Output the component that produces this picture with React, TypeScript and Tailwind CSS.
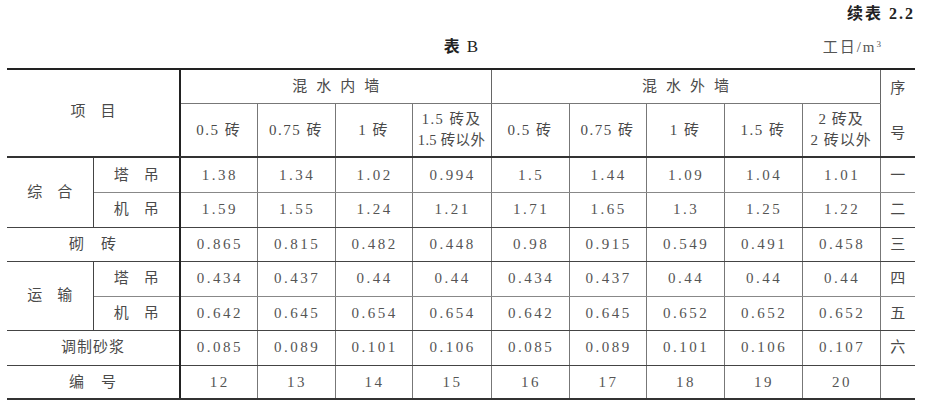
import { FunctionComponent } from "react";

interface RowI {
    group?: string;
    groupSpan?: number;
    sub?: string;
    label?: string;
    values: string[];
    seq: string;
    thin?: boolean;
}

const font = "font-['Liberation_Serif','Noto_Sans_CJK_SC',serif]";

const rows: RowI[] = [
    { group: "综　合", groupSpan: 2, sub: "塔　吊", values: ["1.38", "1.34", "1.02", "0.994", "1.5", "1.44", "1.09", "1.04", "1.01"], seq: "一", thin: true },
    { sub: "机　吊", values: ["1.59", "1.55", "1.24", "1.21", "1.71", "1.65", "1.3", "1.25", "1.22"], seq: "二" },
    { label: "砌　砖", values: ["0.865", "0.815", "0.482", "0.448", "0.98", "0.915", "0.549", "0.491", "0.458"], seq: "三" },
    { group: "运　输", groupSpan: 2, sub: "塔　吊", values: ["0.434", "0.437", "0.44", "0.44", "0.434", "0.437", "0.44", "0.44", "0.44"], seq: "四", thin: true },
    { sub: "机　吊", values: ["0.642", "0.645", "0.654", "0.654", "0.642", "0.645", "0.652", "0.652", "0.652"], seq: "五" },
    { label: "调制砂浆", values: ["0.085", "0.089", "0.101", "0.106", "0.085", "0.089", "0.101", "0.106", "0.107"], seq: "六" },
    { label: "编　号", values: ["12", "13", "14", "15", "16", "17", "18", "19", "20"], seq: "" },
];

const heights = ["h-[35px]", "h-[35px]", "h-[34px]", "h-[35px]", "h-[34px]", "h-[35px]", "h-[34px]"];

const App: FunctionComponent = () => {
    return (
        <div className={`w-[926px] h-[405px] bg-white text-[#4a4a4a] ${font}`}>
            <div className="w-[915px]">
                {/* continued table title */}
                <div className="h-[28px] flex items-center justify-end">
                    <span className="text-[16px] font-bold text-[#222] tracking-[2px]">续表 2.2</span>
                </div>

                {/* table caption and unit */}
                <div className="h-[40px] grid grid-cols-[1fr_auto_1fr] items-center pl-[7px]">
                    <div></div>
                    <div className="text-[16px] text-[#222] pb-[2px]">
                        <span className="font-bold">表</span> <span className="text-[17px] ml-[3px]">B</span>
                    </div>
                    <div className="text-right pr-[34px] text-[15px] text-[#555] pb-[2px]">
                        <span className="tracking-[2px]">工日/m</span><sup className="text-[9px]">3</sup>
                    </div>
                </div>

                <table className="ml-[7px] w-[908px] table-fixed border-collapse text-[15px]">
                    <colgroup>
                        <col className="w-[86px]" />
                        <col className="w-[87px]" />
                        <col className="w-[77px]" />
                        <col className="w-[78px]" />
                        <col className="w-[77px]" />
                        <col className="w-[79px]" />
                        <col className="w-[78px]" />
                        <col className="w-[77px]" />
                        <col className="w-[78px]" />
                        <col className="w-[78px]" />
                        <col className="w-[78px]" />
                        <col className="w-[35px]" />
                    </colgroup>
                    <thead>
                        <tr className="h-[34px]">
                            <td colSpan={2} rowSpan={2} className="border-t-2 border-t-[#222] border-b-2 border-b-[#333] text-center align-middle p-0 pb-[4px]">
                                项　目
                            </td>
                            <td colSpan={4} className="border-t-2 border-t-[#222] border-l-2 border-l-[#222] border-b border-b-[#777] border-r border-r-[#666] text-center p-0 tracking-[9px] pl-[9px]">
                                混水内墙
                            </td>
                            <td colSpan={5} className="border-t-2 border-t-[#222] border-b border-b-[#777] border-r border-r-[#666] text-center p-0 tracking-[9px] pl-[9px]">
                                混水外墙
                            </td>
                            <td rowSpan={2} className="border-t-2 border-t-[#222] border-b-2 border-b-[#333] p-0 align-top">
                                <div className="h-[86px] flex flex-col items-center justify-between pt-[7px] pb-[12px]">
                                    <span>序</span>
                                    <span>号</span>
                                </div>
                            </td>
                        </tr>
                        <tr className="h-[52px]">
                            {["0.5 砖", "0.75 砖", "1 砖"].map((t, i) => (
                                <td key={i} className={`border-b-2 border-b-[#333] border-r border-r-[#777] text-center p-0 tracking-[1.5px] ${i == 0 ? "border-l-2 border-l-[#222]" : ""}`}>
                                    {t}
                                </td>
                            ))}
                            <td className="border-b-2 border-b-[#333] border-r border-r-[#666] text-center p-0 leading-[21px] whitespace-nowrap text-[14.5px]">
                                <div className="tracking-[1.5px]">1.5 砖及</div>
                                <div className="tracking-[0.3px]">1.5 砖以外</div>
                            </td>
                            {["0.5 砖", "0.75 砖", "1 砖", "1.5 砖"].map((t, i) => (
                                <td key={i} className="border-b-2 border-b-[#333] border-r border-r-[#777] text-center p-0 tracking-[1.5px]">
                                    {t}
                                </td>
                            ))}
                            <td className="border-b-2 border-b-[#333] border-r border-r-[#666] text-center p-0 leading-[21px] whitespace-nowrap tracking-[1px]">
                                <div>2 砖及</div>
                                <div>2 砖以外</div>
                            </td>
                        </tr>
                    </thead>
                    <tbody>
                        {rows.map((r, key) => {
                            const last = key == rows.length - 1;
                            const bottom = last ? "border-b-2 border-b-[#333]" : r.thin ? "border-b border-b-[#888]" : "border-b border-b-[#444]";
                            const fullBottom = last ? "border-b-2 border-b-[#333]" : "border-b border-b-[#444]";
                            return (
                                <tr key={key} className={heights[key]}>
                                    {r.group ? (
                                        <td rowSpan={r.groupSpan} className={`${fullBottom} border-r border-r-[#444] text-center p-0`}>
                                            {r.group}
                                        </td>
                                    ) : null}
                                    {r.sub ? (
                                        <td className={`${bottom} text-center p-0`}>{r.sub}</td>
                                    ) : null}
                                    {r.label ? (
                                        <td colSpan={2} className={`${bottom} text-center p-0 tracking-[1px]`}>{r.label}</td>
                                    ) : null}
                                    {r.values.map((v, i) => (
                                        <td
                                            key={i}
                                            className={`${bottom} border-r border-r-[#777] text-center p-0 tracking-[2.5px] pl-[2px] text-[#555] ${i == 0 ? "border-l-2 border-l-[#222]" : ""}`}
                                        >
                                            {v}
                                        </td>
                                    ))}
                                    <td className={`${bottom} text-center p-0`}>{r.seq}</td>
                                </tr>
                            );
                        })}
                    </tbody>
                </table>
            </div>
        </div>
    );
};

export default App;
